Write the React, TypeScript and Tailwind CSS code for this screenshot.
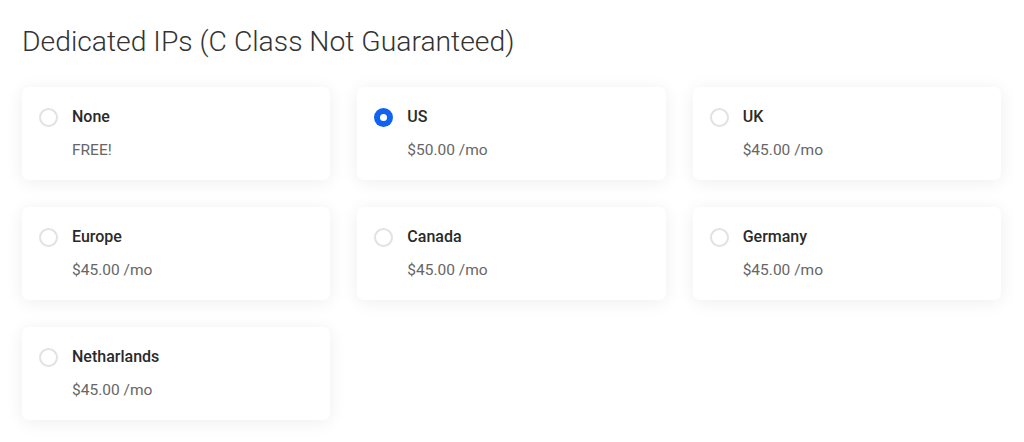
import { useState } from "react";

type Plan = { id: string; name: string; price: string };

const plans: Plan[] = [
  { id: "none", name: "None", price: "FREE!" },
  { id: "us", name: "US", price: "$50.00 /mo" },
  { id: "uk", name: "UK", price: "$45.00 /mo" },
  { id: "eu", name: "Europe", price: "$45.00 /mo" },
  { id: "ca", name: "Canada", price: "$45.00 /mo" },
  { id: "de", name: "Germany", price: "$45.00 /mo" },
  { id: "nl", name: "Netharlands", price: "$45.00 /mo" },
];

export default function App() {
  const [selected, setSelected] = useState("us");

  return (
    <main className="min-h-screen bg-white font-['Roboto',sans-serif] px-[22px] pt-[25px]">
      <h2 className="text-[28.3px] leading-[34px] font-light text-[#333]">
        Dedicated IPs (C Class Not Guaranteed)
      </h2>

      <div className="mt-[28px] grid w-[979px] grid-cols-3 gap-x-[27px] gap-y-[27px]">
        {plans.map((p) => {
          const active = p.id === selected;
          return (
            <button
              key={p.id}
              onClick={() => setSelected(p.id)}
              className="flex h-[93px] items-start rounded-[7px] bg-white pl-[17px] pt-[20px] text-left shadow-[0_2px_18px_rgba(0,0,0,0.07)]"
            >
              <span
                className={
                  active
                    ? "mt-[1px] flex h-[19px] w-[19px] shrink-0 items-center justify-center rounded-full bg-[#1062f0]"
                    : "mt-[1px] h-[19px] w-[19px] shrink-0 rounded-full border-2 border-[#e2e2e2] bg-white"
                }
              >
                {active && <span className="h-[7px] w-[7px] rounded-full bg-white" />}
              </span>
              <span className="ml-[14px] flex flex-col">
                <span className="text-[16px] leading-[20px] font-medium text-[#2a2a2a]">{p.name}</span>
                <span className="mt-[13px] text-[15.5px] leading-[20px] text-[#666]">{p.price}</span>
              </span>
            </button>
          );
        })}
      </div>
    </main>
  );
}
